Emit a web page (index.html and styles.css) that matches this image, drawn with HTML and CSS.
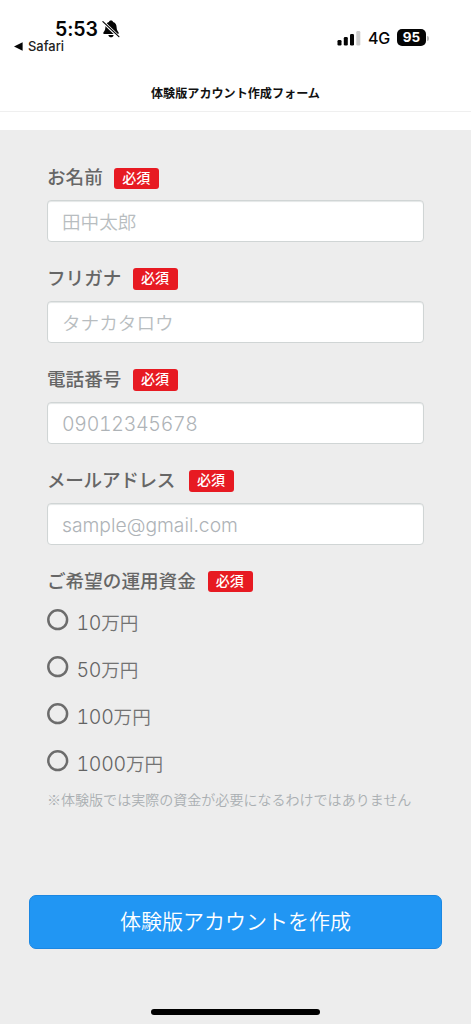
FILE: index.html
```html
<!DOCTYPE html>
<html lang="ja">
<head>
<meta charset="utf-8">
<title>体験版アカウント作成フォーム</title>
<link rel="stylesheet" href="styles.css">
</head>
<body>
<div class="screen">
  <header class="statusbar">
    <div class="status-left">
      <div class="clock">
        <span class="time">5:53</span>
        <svg class="bell" width="18" height="18" viewBox="0 0 18 18">
          <path d="M9 .6C10.3.6 10.9 1.3 11.1 2C13.6 2.8 14.5 4.8 14.6 7.2C14.7 10.2 15.8 11 16.5 12.2C17 13.2 16.6 14 15.6 14H2.4C1.4 14 1 13.2 1.5 12.2C2.2 11 3.3 10.2 3.4 7.2C3.5 4.8 4.4 2.8 6.9 2C7.1 1.3 7.7.6 9 .6Z" fill="#050505"/>
          <path d="M6.3 15H11.7C11.3 16.5 10.3 17.3 9 17.3S6.7 16.5 6.3 15Z" fill="#050505"/>
          <path d="M.8 1.7L17 17" stroke="#fff" stroke-width="3"/>
          <path d="M.9 1.6L16.9 16.6" stroke="#050505" stroke-width="1.2" stroke-linecap="round"/>
        </svg>
      </div>
      <div class="back">
        <svg width="9" height="9" viewBox="0 0 9 9"><path d="M0 4.5L8.6.3V8.7Z" fill="#050505"/></svg>
        <span>Safari</span>
      </div>
    </div>
    <div class="status-right">
      <svg class="signal" width="24" height="16" viewBox="0 0 24 16">
        <rect x="0.5" y="10" width="4" height="5.5" rx="1.2" fill="#050505"/>
        <rect x="6.8" y="7" width="4" height="8.5" rx="1.2" fill="#050505"/>
        <rect x="13" y="4" width="4" height="11.5" rx="1.2" fill="#050505"/>
        <rect x="19.3" y="1" width="4" height="14.5" rx="1.2" fill="#ccc"/>
      </svg>
      <span class="network">4G</span>
      <span class="battery">95</span>
      <span class="battery-tip"></span>
    </div>
  </header>
  <h1 class="title">体験版アカウント作成フォーム</h1>
  <form class="form">
    <div class="field">
      <div class="label">お名前<span class="badge">必須</span></div>
      <div class="input">田中太郎</div>
    </div>
    <div class="field">
      <div class="label">フリガナ<span class="badge">必須</span></div>
      <div class="input">タナカタロウ</div>
    </div>
    <div class="field">
      <div class="label">電話番号<span class="badge">必須</span></div>
      <div class="input latin phone">09012345678</div>
    </div>
    <div class="field">
      <div class="label label-mail">メールアドレス<span class="badge">必須</span></div>
      <div class="input latin mail">sample@gmail.com</div>
    </div>
    <div class="label label-funds">ご希望の運用資金<span class="badge">必須</span></div>
    <div class="options">
      <div class="option"><svg class="radio" viewBox="0 0 22 22"><circle cx="10.7" cy="10.7" r="9.4"/></svg><span class="amount"><span class="num">10</span>万円</span></div>
      <div class="option"><svg class="radio" viewBox="0 0 22 22"><circle cx="10.7" cy="10.7" r="9.4"/></svg><span class="amount"><span class="num">50</span>万円</span></div>
      <div class="option"><svg class="radio" viewBox="0 0 22 22"><circle cx="10.7" cy="10.7" r="9.4"/></svg><span class="amount"><span class="num">100</span>万円</span></div>
      <div class="option"><svg class="radio" viewBox="0 0 22 22"><circle cx="10.7" cy="10.7" r="9.4"/></svg><span class="amount"><span class="num">1000</span>万円</span></div>
    </div>
    <p class="note">※体験版では実際の資金が必要になるわけではありません</p>
    <button class="submit" type="button">体験版アカウントを作成</button>
  </form>
  <div class="home"></div>
</div>
</body>
</html>
```
FILE: styles.css
```css
* { box-sizing: border-box; }
body {
  margin: 0;
  background: #ededed;
  font-family: "Noto Sans CJK JP", sans-serif;
}
.screen {
  width: 471px;
  height: 1024px;
  overflow: hidden;
  display: flex;
  flex-direction: column;
  background: #ededed;
}
.statusbar {
  height: 74px;
  flex: none;
  background: #fff;
  display: flex;
  justify-content: space-between;
  font-family: Inter, sans-serif;
  color: #050505;
}
.status-left { padding: 17px 0 0 14px; }
.clock {
  display: flex;
  align-items: center;
  height: 23px;
  padding-left: 41px;
}
.time {
  width: 44px;
  font-size: 19.5px;
  font-weight: 600;
  letter-spacing: -0.1px;
  white-space: nowrap;
}
.bell { margin-left: 2.5px; }
.back {
  display: flex;
  align-items: center;
  gap: 5px;
  height: 13px;
  font-size: 12.9px;
  line-height: 13px;
  font-weight: 500;
  color: #222;
}
.status-right {
  display: flex;
  align-items: center;
  height: 20px;
  margin: 28px 42px 0 0;
}
.network {
  width: 23px;
  margin-left: 7px;
  font-size: 16px;
  font-weight: 500;
  letter-spacing: -0.3px;
}
.battery {
  width: 29px;
  height: 16.5px;
  margin-left: 6px;
  margin-top: -1px;
  border-radius: 5px;
  background: #050505;
  color: #fff;
  font-size: 13.5px;
  line-height: 16.5px;
  font-weight: 700;
  text-align: center;
}
.battery-tip {
  width: 2px;
  height: 5px;
  margin-left: 1px;
  border-radius: 0 2px 2px 0;
  background: #bbb;
}
.title {
  flex: none;
  height: 38px;
  margin: 0;
  border-bottom: 1.5px solid #efefef;
  background: #fff;
  font-size: 12.1px;
  line-height: 37px;
  font-weight: 700;
  text-align: center;
  color: #111;
}
.form {
  flex: none;
  border-top: 18px solid #fff;
  padding: 36.4px 47px 0;
  display: flex;
  flex-direction: column;
}
.field {
  height: 100.8px;
  flex: none;
}
.label {
  display: flex;
  align-items: center;
  height: 22px;
  margin-bottom: 12px;
  font-size: 18.6px;
  line-height: 20px;
  padding-bottom: 2px;
  font-weight: 500;
  color: #666;
}
.badge {
  width: 45px;
  height: 21.5px;
  margin-left: 11.5px;
  margin-top: 4px;
  padding-right: 1px;
  border-radius: 3px;
  background: #e71a22;
  color: #fff;
  font-size: 14px;
  line-height: 18px;
  font-weight: 500;
  text-align: center;
}
.label-mail { letter-spacing: -0.3px; }
.label-mail .badge { margin-left: 14px; letter-spacing: 0; }
.label-funds .badge { margin-left: 12px; }
.input {
  width: 377px;
  height: 42px;
  padding: 0 14px;
  border: 1px solid #d0d5d5;
  border-radius: 4px;
  box-shadow: inset 0 1px 1px #e4e7e7;
  background: #fff;
  font-size: 18.6px;
  line-height: 40px;
  font-weight: 350;
  color: #b8bdc0;
}
.latin {
  font-family: Inter, sans-serif;
  font-size: 19.5px;
  line-height: 42px;
  font-weight: 300;
  color: #aeb3b7;
}
.mail { font-size: 19.3px; }
.phone {
  font-feature-settings: "tnum";
  letter-spacing: -0.28px;
}
.options { margin-top: -2px; }
.option {
  display: flex;
  height: 46.8px;
}
.radio {
  flex: none;
  width: 22px;
  height: 22px;
  margin-top: 7.6px;
  fill: none;
  stroke: #6c6c6c;
  stroke-width: 2.5;
}
.amount {
  margin-left: 7.5px;
  padding-top: 7.8px;
  font-size: 18.6px;
  line-height: 26px;
  font-weight: 350;
  color: #737373;
}
.num {
  font-family: Inter, sans-serif;
  font-size: 19.5px;
  font-weight: 300;
  color: #636363;
  font-feature-settings: "tnum";
  letter-spacing: -0.25px;
}
.note {
  margin: 0.6px 0 0;
  font-size: 14.04px;
  line-height: 20px;
  font-weight: 350;
  color: #aaafb2;
  white-space: nowrap;
}
.submit {
  width: 413px;
  height: 54px;
  margin: 86px 0 0 -18px;
  padding: 0 0 4px;
  border: 1px solid #1b87e2;
  border-radius: 7px;
  background: #2196f3;
  font-family: "Noto Sans CJK JP", sans-serif;
  font-size: 21px;
  font-weight: 350;
  color: #fff;
}
.home {
  flex: none;
  width: 169px;
  height: 6px;
  margin: auto auto 9.5px;
  border-radius: 3px;
  background: #000;
}
```
